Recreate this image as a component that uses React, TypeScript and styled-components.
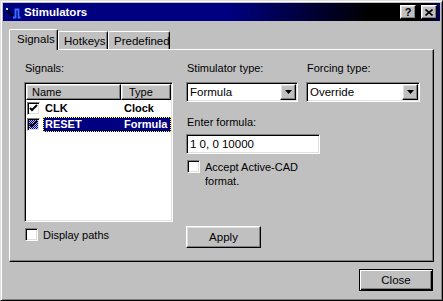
import styled, { createGlobalStyle } from 'styled-components';

const GlobalStyle = createGlobalStyle`
  body {
    margin: 0;
    background: #c0c0c0;
  }
  * {
    box-sizing: border-box;
  }
`;

const raised = `
  border: 1px solid;
  border-color: #fff #000 #000 #fff;
  box-shadow: inset -1px -1px #808080, inset 1px 1px #dfdfdf;
  background: #c0c0c0;
`;

const sunken = `
  border: 1px solid;
  border-color: #808080 #fff #fff #808080;
  box-shadow: inset 1px 1px #000, inset -1px -1px #dfdfdf;
  background: #fff;
`;

const Window = styled.div`
  width: 443px;
  height: 301px;
  display: flex;
  flex-direction: column;
  padding: 2px;
  background: #c0c0c0;
  border: 1px solid;
  border-color: #dfdfdf #000 #000 #dfdfdf;
  box-shadow: inset 1px 1px #fff, inset -1px -1px #808080;
  font-family: 'Liberation Sans', Arial, sans-serif;
  font-size: 11px;
  color: #000;
`;

const TitleBar = styled.div`
  height: 18px;
  display: flex;
  align-items: center;
  gap: 3px;
  padding: 0 3px 0 2px;
  background: linear-gradient(
    90deg,
    #000080 0%,
    #000080 52%,
    #000000 84%,
    #000000 96%,
    #000060 100%
  );
  color: #fff;
  font-weight: bold;
  font-size: 11.5px;
`;

const TitleText = styled.span`
  flex: 1;
  line-height: 16px;
`;

const TitleButton = styled.button<{ gap?: number }>`
  ${raised}
  width: 16px;
  height: 14px;
  padding: 0;
  margin-left: ${({ gap }) => gap ?? 0}px;
  display: flex;
  align-items: center;
  justify-content: center;
  font-family: 'Liberation Sans', Arial, sans-serif;
  font-weight: bold;
  font-size: 11px;
  color: #000;
`;

const Body = styled.div`
  flex: 1;
  display: flex;
  flex-direction: column;
  padding: 8px 6px 0 6px;
`;

const TabRow = styled.div`
  height: 20px;
  display: flex;
  align-items: flex-end;
`;

const Tab = styled.div<{ active?: boolean; w: number }>`
  position: relative;
  z-index: ${({ active }) => (active ? 1 : 0)};
  width: ${({ w }) => w}px;
  height: ${({ active }) => (active ? 21 : 18)}px;
  margin-bottom: ${({ active }) => (active ? -1 : 0)}px;
  display: flex;
  align-items: center;
  padding: ${({ active }) => (active ? '0 0 2px 7px' : '0 0 0 5px')};
  background: #c0c0c0;
  border-top: 1px solid #fff;
  border-left: 1px solid #fff;
  border-right: 1px solid #000;
  border-radius: 2px 2px 0 0;
  box-shadow: inset -1px 0 #808080;
  font-size: 11.5px;
`;

const Panel = styled.div`
  height: 213px;
  display: grid;
  grid-template-columns: 149px 1fr;
  column-gap: 13px;
  padding: 12px 12px 13px 14px;
  border: 1px solid;
  border-color: #fff #000 #000 #fff;
  box-shadow: inset -1px -1px #808080;
`;

const Column = styled.div<{ stretch?: boolean }>`
  display: flex;
  flex-direction: column;
  align-self: ${({ stretch }) => (stretch ? 'stretch' : 'start')};
`;

const Label = styled.div<{ mb: number; mt?: number }>`
  line-height: 13px;
  margin: ${({ mt }) => mt ?? 0}px 0 ${({ mb }) => mb}px 1px;
  white-space: nowrap;
`;

const ListBox = styled.div`
  ${sunken}
  height: 140px;
  padding: 1px;
  overflow: hidden;
`;

const ListHeader = styled.div`
  display: grid;
  grid-template-columns: 95px 1fr;
  height: 16px;
`;

const HeaderCell = styled.div<{ pad: number }>`
  ${raised}
  line-height: 14px;
  padding-left: ${({ pad }) => pad}px;
`;

const ListRow = styled.div`
  display: grid;
  grid-template-columns: 17px 1fr;
  height: 16px;
  align-items: center;
`;

const RowText = styled.div<{ selected?: boolean }>`
  height: 15px;
  display: grid;
  grid-template-columns: 78px 1fr;
  align-items: center;
  font-weight: bold;
  font-size: 11px;
  color: ${({ selected }) => (selected ? '#fff' : '#000')};
  background: ${({ selected }) => (selected ? '#000080' : 'transparent')};
  border: 1px dotted ${({ selected }) => (selected ? '#ffff00' : 'transparent')};
  span:first-child {
    padding-left: 1px;
  }
  span:last-child {
    padding-left: 2px;
    white-space: nowrap;
  }
`;

const Check = styled.div<{ dither?: boolean }>`
  ${sunken}
  width: 13px;
  height: 13px;
  flex: none;
  display: flex;
  align-items: center;
  justify-content: center;
  margin-left: 1px;
  ${({ dither }) =>
    dither &&
    'background: repeating-conic-gradient(#000080 0 25%, #c0c0ff 0 50%) 0 0 / 2px 2px;'}
`;

const CheckRow = styled.label<{ mt: number }>`
  display: flex;
  align-items: flex-start;
  gap: 5px;
  margin-top: ${({ mt }) => mt}px;
  line-height: 14px;
`;

const FieldRow = styled.div`
  display: flex;
  gap: 8px;
`;

const Field = styled.div`
  display: flex;
  flex-direction: column;
`;

const Select = styled.div<{ w: number }>`
  ${sunken}
  width: ${({ w }) => w}px;
  height: 20px;
  padding: 1px;
  display: flex;
  align-items: center;
  span {
    flex: 1;
    padding-left: 2px;
    font-size: 11.5px;
  }
`;

const DropButton = styled.div`
  ${raised}
  width: 16px;
  height: 16px;
  display: flex;
  align-items: center;
  justify-content: center;
`;

const TextInput = styled.div`
  ${sunken}
  width: 134px;
  height: 20px;
  padding: 0 3px;
  line-height: 18px;
  font-size: 11.5px;
`;

const Button = styled.button<{ isDefault?: boolean; w: number }>`
  width: ${({ w }) => w}px;
  height: 22px;
  padding: 0;
  background: #c0c0c0;
  font-family: 'Liberation Sans', Arial, sans-serif;
  font-size: 11.5px;
  color: #000;
  border: 1px solid;
  border-color: ${({ isDefault }) => (isDefault ? '#000' : '#fff #000 #000 #fff')};
  box-shadow: ${({ isDefault }) =>
    isDefault
      ? 'inset 1px 1px #fff, inset -1px -1px #000, inset -2px -2px #808080'
      : 'inset -1px -1px #808080, inset 1px 1px #dfdfdf'};
`;

const ApplyButton = styled(Button)`
  margin-top: auto;
`;

const Footer = styled.div`
  display: flex;
  justify-content: flex-end;
  padding: 7px 1px 0 0;
`;

const CheckMark = () => (
  <svg width='9' height='9' viewBox='0 0 9 9'>
    <path d='M1 4 L3 6 L8 1' stroke='#000' strokeWidth='2' fill='none' />
  </svg>
);

const Arrow = () => (
  <svg width='7' height='4' viewBox='0 0 7 4'>
    <path d='M0 0 H7 L3.5 4 Z' fill='#000' />
  </svg>
);

const AppIcon = () => (
  <svg width='16' height='16' viewBox='0 0 16 16'>
    <path d='M1.5 5.5 L7.5 11.5' stroke='#000' strokeWidth='2.2' />
    <rect x='1' y='4' width='2' height='2' fill='#8ff' />
    <path d='M8 13.5 H10.5 V5.5 H13.5 V13.5 H15.5' stroke='#3a6cff' strokeWidth='1.8' fill='none' />
  </svg>
);

const CloseGlyph = () => (
  <svg width='8' height='7' viewBox='0 0 8 7'>
    <path d='M0.5 0.5 L7.5 6.5 M7.5 0.5 L0.5 6.5' stroke='#000' strokeWidth='1.6' />
  </svg>
);

const signals = [
  { name: 'CLK', type: 'Clock', selected: false },
  { name: 'RESET', type: 'Formula', selected: true },
];

const App = (): JSX.Element => (
  <>
    <GlobalStyle />
    <Window>
      <TitleBar>
        <AppIcon />
        <TitleText>Stimulators</TitleText>
        <TitleButton>?</TitleButton>
        <TitleButton gap={2}>
          <CloseGlyph />
        </TitleButton>
      </TitleBar>
      <Body>
        <TabRow>
          <Tab active w={49}>Signals</Tab>
          <Tab w={50}>Hotkeys</Tab>
          <Tab w={62}>Predefined</Tab>
        </TabRow>
        <Panel>
          <Column>
            <Label mb={7}>Signals:</Label>
            <ListBox>
              <ListHeader>
                <HeaderCell pad={5}>Name</HeaderCell>
                <HeaderCell pad={7}>Type</HeaderCell>
              </ListHeader>
              {signals.map((s) => (
                <ListRow key={s.name}>
                  <Check dither={s.selected}>
                    <CheckMark />
                  </Check>
                  <RowText selected={s.selected}>
                    <span>{s.name}</span>
                    <span>{s.type}</span>
                  </RowText>
                </ListRow>
              ))}
            </ListBox>
            <CheckRow mt={6}>
              <Check />
              <span>Display paths</span>
            </CheckRow>
          </Column>
          <Column stretch>
            <FieldRow>
              <Field>
                <Label mb={7}>Stimulator type:</Label>
                <Select w={112}>
                  <span>Formula</span>
                  <DropButton>
                    <Arrow />
                  </DropButton>
                </Select>
              </Field>
              <Field>
                <Label mb={7}>Forcing type:</Label>
                <Select w={114}>
                  <span>Override</span>
                  <DropButton>
                    <Arrow />
                  </DropButton>
                </Select>
              </Field>
            </FieldRow>
            <Label mt={14} mb={5}>
              Enter formula:
            </Label>
            <TextInput>1 0, 0 10000</TextInput>
            <CheckRow mt={6}>
              <Check />
              <span>
                Accept Active-CAD
                <br />
                format.
              </span>
            </CheckRow>
            <ApplyButton w={75}>Apply</ApplyButton>
          </Column>
        </Panel>
        <Footer>
          <Button isDefault w={74}>
            Close
          </Button>
        </Footer>
      </Body>
    </Window>
  </>
);

export default App;
